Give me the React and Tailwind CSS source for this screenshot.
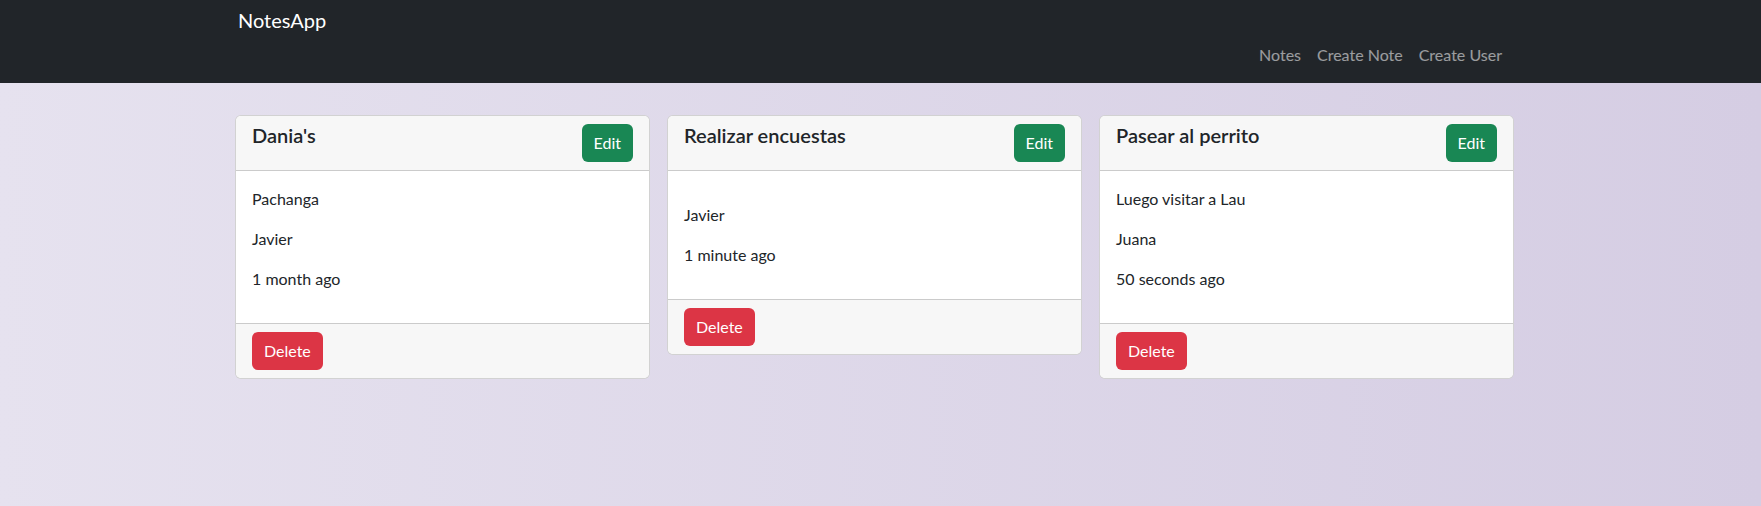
import React from 'react';

const notes = [
  { id: 1, title: "Dania's", content: 'Pachanga', author: 'Javier', date: '1 month ago' },
  { id: 2, title: 'Realizar encuestas', content: '', author: 'Javier', date: '1 minute ago' },
  { id: 3, title: 'Pasear al perrito', content: 'Luego visitar a Lau', author: 'Juana', date: '50 seconds ago' },
];

const NoteCard = ({ note }) => (
  <div className="w-[415px] bg-white border border-black/[0.175] rounded-md overflow-hidden text-[#212529]">
    {/* Header */}
    <div className="flex justify-between items-start px-4 py-2 bg-[#f7f7f7] border-b border-black/[0.175]">
      <h5 className="text-[20px] leading-[1.2] font-semibold -mt-[1px]">{note.title}</h5>
      <button className="h-[38px] px-3 rounded-md bg-[#198754] text-white text-base">Edit</button>
    </div>

    {/* Body */}
    <div className="p-4">
      <p className="mb-4 leading-6">{note.content}</p>
      <p className="mb-4 leading-6">{note.author}</p>
      <p className="mb-4 leading-6">{note.date}</p>
    </div>

    {/* Footer */}
    <div className="px-4 py-2 bg-[#f7f7f7] border-t border-black/[0.175]">
      <button className="h-[38px] px-3 rounded-md bg-[#dc3545] text-white text-base">Delete</button>
    </div>
  </div>
);

const App = () => {
  return (
    <div
      className="min-h-screen bg-gradient-to-r from-[#e6e2ef] to-[#d5cde3]"
      style={{ fontFamily: 'Lato, "Noto Sans", sans-serif' }}
    >
      {/* Navbar */}
      <nav className="h-[83px] bg-[#212529] flex flex-col pl-[238px] pr-[259px]">
        <div className="pt-[5px] text-[20px] leading-[30px] text-white">NotesApp</div>
        <div className="flex justify-end">
          <a className="px-2 py-2 leading-6 text-white/55">Notes</a>
          <a className="px-2 py-2 leading-6 text-white/55">Create Note</a>
          <a className="pl-2 py-2 leading-6 text-white/55">Create User</a>
        </div>
      </nav>

      {/* Notes */}
      <div className="pt-[32px] pl-[235px] flex items-start gap-[17px]">
        {notes.map((note) => (
          <NoteCard key={note.id} note={note} />
        ))}
      </div>
    </div>
  );
};

export default App;
